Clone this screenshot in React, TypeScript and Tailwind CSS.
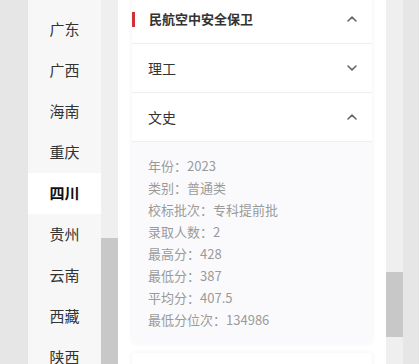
import React from 'react'

const provinces = ['广东', '广西', '海南', '重庆', '四川', '贵州', '云南', '西藏', '陕西']

const details = [
  ['年份', '2023'],
  ['类别', '普通类'],
  ['校标批次', '专科提前批'],
  ['录取人数', '2'],
  ['最高分', '428'],
  ['最低分', '387'],
  ['平均分', '407.5'],
  ['最低分位次', '134986'],
]

function Chevron({ up }: { up?: boolean }) {
  return (
    <svg width="10" height="6" viewBox="0 0 10 6" fill="none" className="shrink-0">
      <polyline
        points={up ? '1,5 5,1.2 9,5' : '1,1 5,4.8 9,1'}
        stroke="#666"
        strokeWidth="1.6"
        strokeLinecap="round"
        strokeLinejoin="round"
      />
    </svg>
  )
}

export default function App() {
  return (
    <div
      className="w-[419px] h-[364px] overflow-hidden bg-[#e6e6e6] flex pl-[28px]"
      style={{ fontFamily: '"Noto Sans CJK SC", "Noto Sans", sans-serif' }}
    >
      {/* province sidebar */}
      <div className="w-[73px] bg-[#f7f7f7] overflow-hidden">
        <div className="flex flex-col pt-[8.5px]">
          {provinces.map((p) => (
            <div
              key={p}
              className={
                p === '四川'
                  ? 'h-[41px] shrink-0 flex items-center justify-center text-[15px] font-bold text-[#111] bg-white'
                  : 'h-[41px] shrink-0 flex items-center justify-center text-[15px] text-[#333]'
              }
            >
              {p}
            </div>
          ))}
        </div>
      </div>

      {/* sidebar scrollbar */}
      <div className="w-[17px] bg-[#efefef] flex flex-col pt-[238px]">
        <div className="flex-1 bg-[#c8c8c8]" />
      </div>

      {/* main content */}
      <div className="w-[268px] bg-white px-[14px] overflow-hidden">
        <div className="mt-[-5px] bg-white rounded-[4px] shadow-[0_0_4px_rgba(60,60,120,0.08)] overflow-hidden">
          <div className="h-[49px] flex items-center border-b border-[#eeeeee]">
            <div className="w-[3px] h-[15px] bg-[#d0303a]" />
            <span className="flex-1 pl-[14px] text-[13px] font-bold text-[#333]">民航空中安全保卫</span>
            <div className="pr-[15px]">
              <Chevron up />
            </div>
          </div>
          <div className="h-[49px] flex items-center border-b border-[#eeeeee] pl-[16px] pr-[15px]">
            <span className="flex-1 text-[14px] text-[#333]">理工</span>
            <Chevron />
          </div>
          <div className="h-[49px] flex items-center border-b border-[#eeeeee] pl-[16px] pr-[15px]">
            <span className="flex-1 text-[14px] text-[#333]">文史</span>
            <Chevron up />
          </div>
          <div className="bg-[#fafafc] pl-[16px] pt-[13px] pb-[12px]">
            {details.map(([k, v]) => (
              <div key={k} className="text-[13px] leading-[22px] text-[#9a9a9a]">
                {k}：{v}
              </div>
            ))}
          </div>
        </div>
        <div className="mt-[10px] h-[40px] bg-white rounded-[4px] shadow-[0_0_4px_rgba(60,60,120,0.08)]" />
      </div>

      {/* main scrollbar */}
      <div className="w-[17px] bg-[#efefef] flex flex-col pt-[272px]">
        <div className="h-[65px] bg-[#c8c8c8]" />
      </div>
    </div>
  )
}
